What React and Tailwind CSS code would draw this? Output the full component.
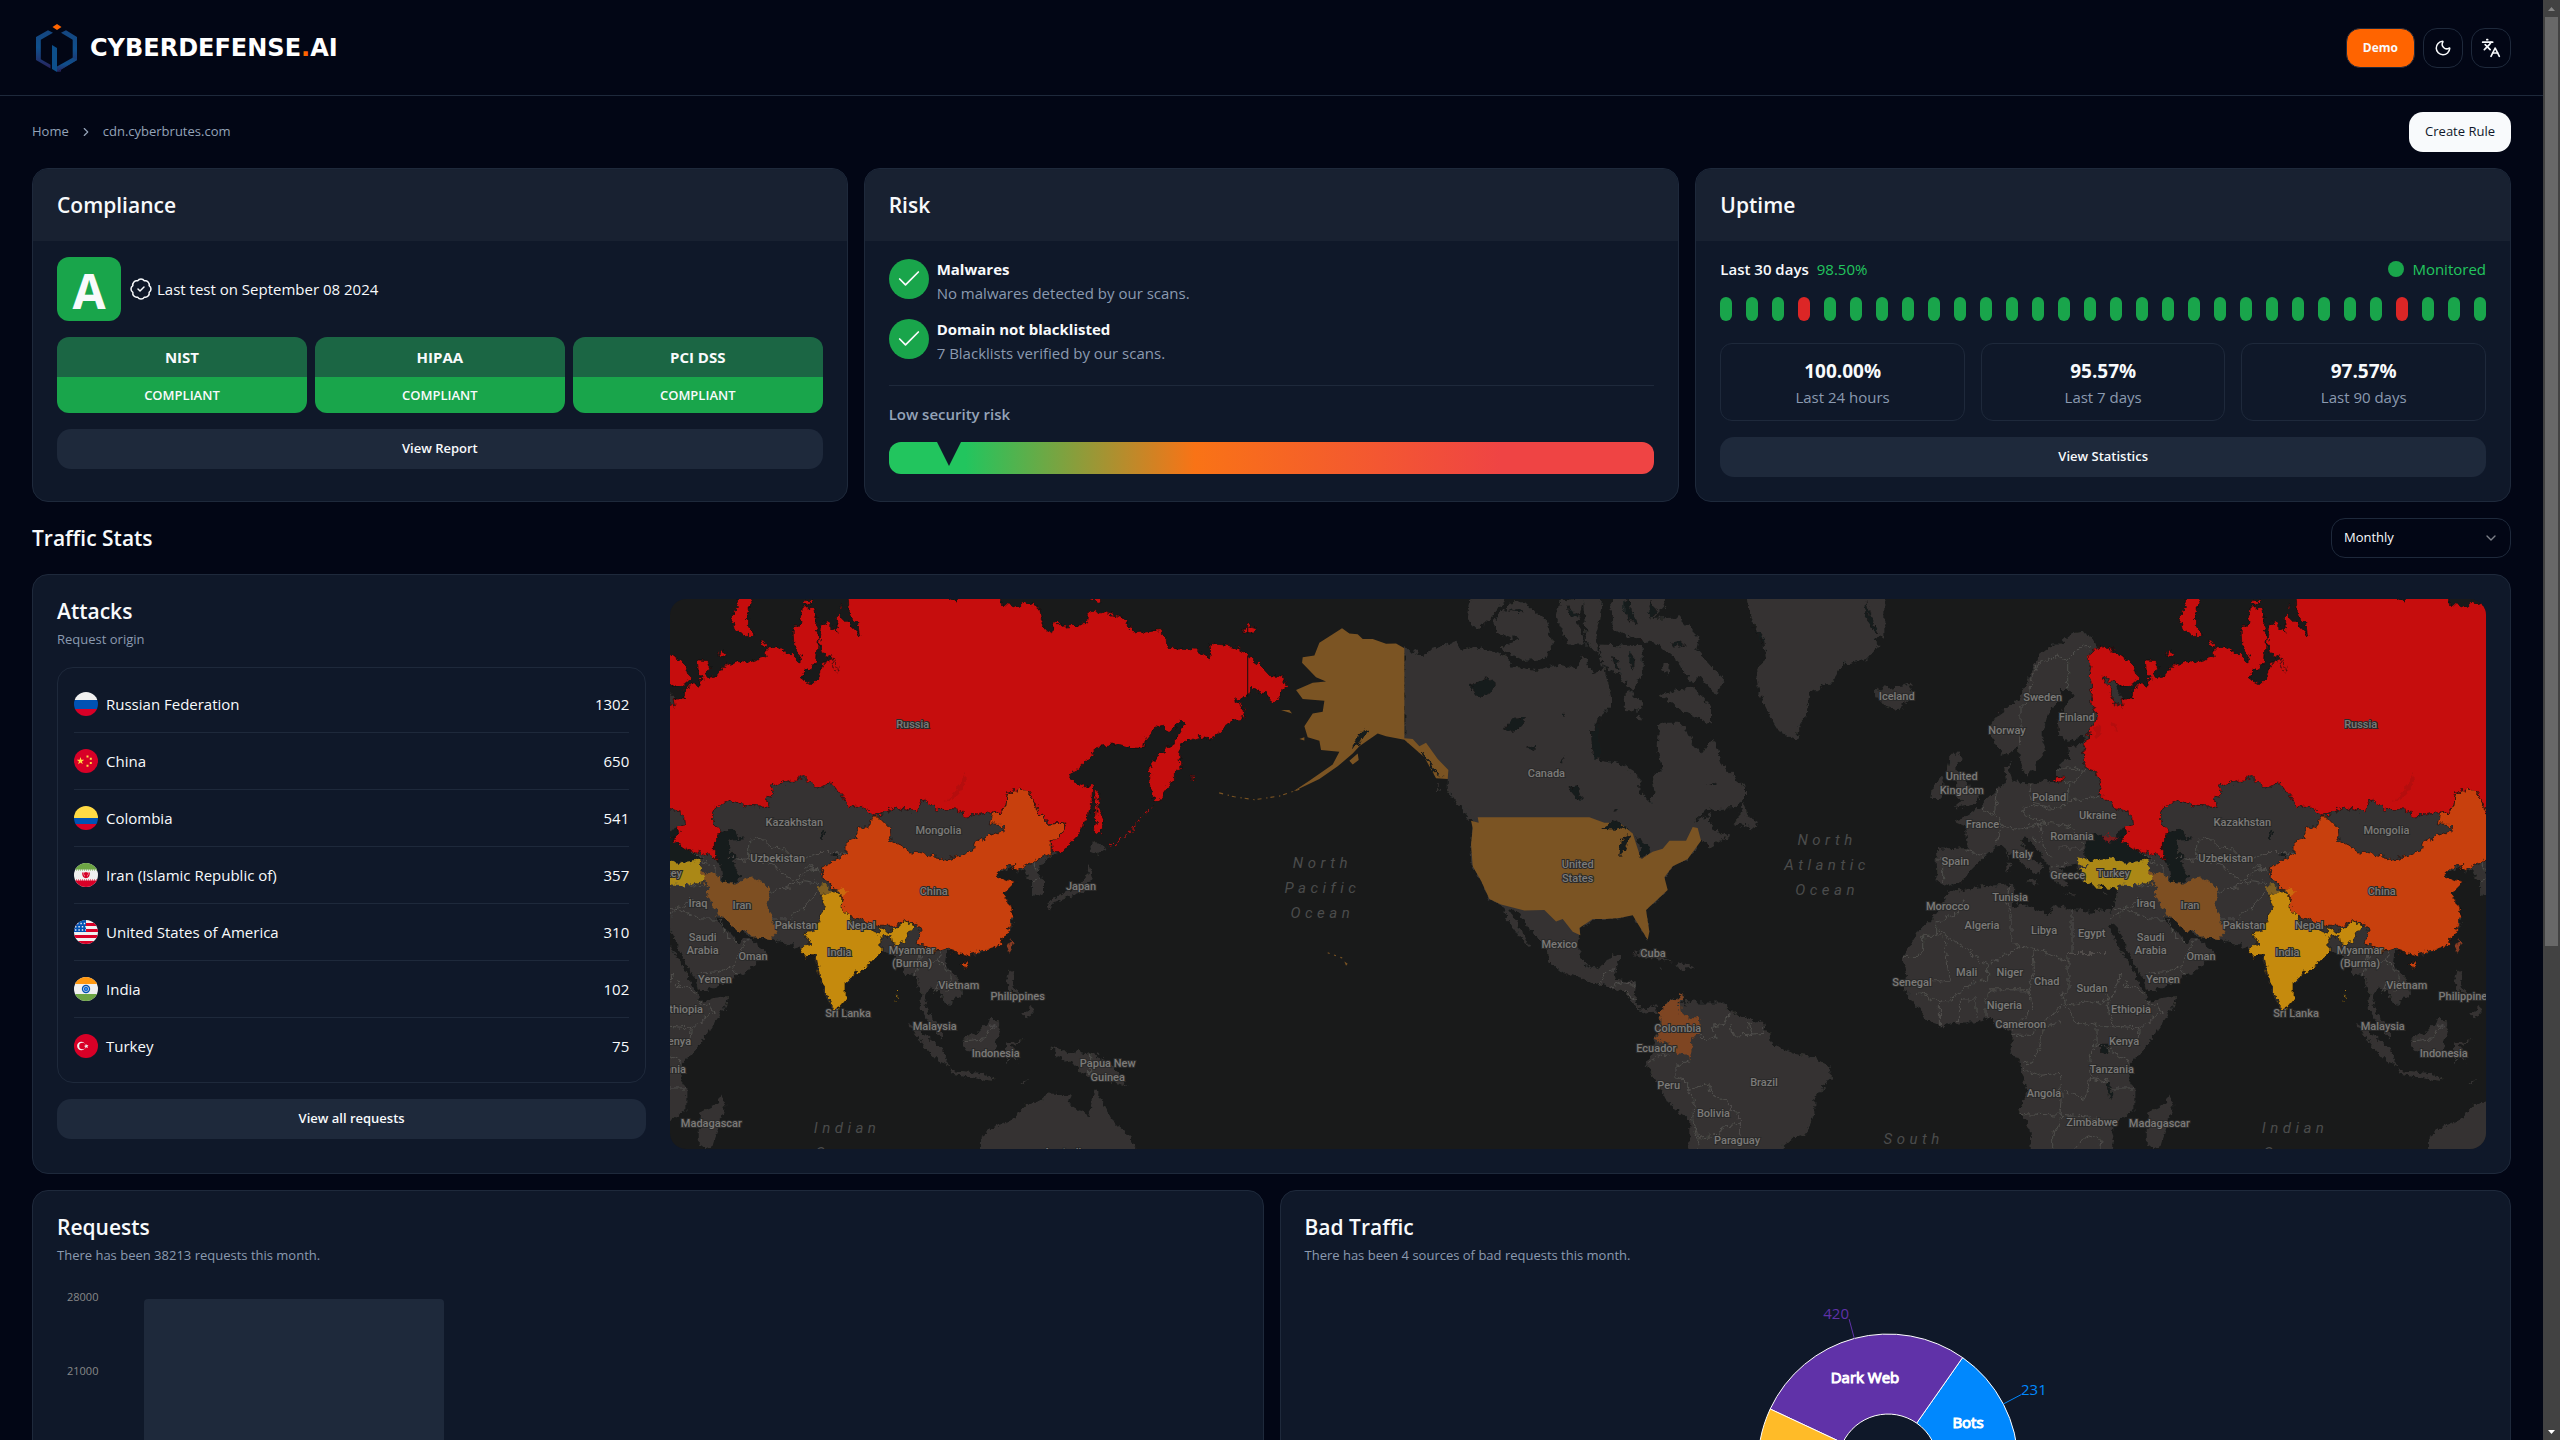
import { useState } from 'react'
import { BadgeCheck, Check, ChevronDown, ChevronRight, Languages, Moon } from 'lucide-react'

const standards = ['NIST', 'HIPAA', 'PCI DSS']

const scans = [
    { title: 'Malwares', text: 'No malwares detected by our scans.' },
    { title: 'Domain not blacklisted', text: '7 Blacklists verified by our scans.' },
]

const uptimeStats = [
    { value: '100.00%', label: 'Last 24 hours' },
    { value: '95.57%', label: 'Last 7 days' },
    { value: '97.57%', label: 'Last 90 days' },
]

const downDays = [3, 26]
const days = Array.from({ length: 30 }, (_, i) => !downDays.includes(i))

const attacks = [
    { code: 'ru', name: 'Russian Federation', count: 1302 },
    { code: 'cn', name: 'China', count: 650 },
    { code: 'co', name: 'Colombia', count: 541 },
    { code: 'ir', name: 'Iran (Islamic Republic of)', count: 357 },
    { code: 'us', name: 'United States of America', count: 310 },
    { code: 'in', name: 'India', count: 102 },
    { code: 'tr', name: 'Turkey', count: 75 },
]

const flags = {
    ru: (
        <>
            <path fill="#f0f0f0" d="M0 0h24v8H0z" />
            <path fill="#0052b4" d="M0 8h24v9H0z" />
            <path fill="#d80027" d="M0 17h24v7H0z" />
        </>
    ),
    cn: (
        <>
            <path fill="#d80027" d="M0 0h24v24H0z" />
            <path fill="#ffda44" d="m6.500 8 .9 2.800h2.900l-2.400 1.700.9 2.800-2.300-1.700-2.400 1.700.9-2.800-2.300-1.700h2.900z" />
            <path fill="#ffda44" d="M12.500 6.500h2v2h-2zM15.800 8.800h2v2h-2zM15.800 13h2v2h-2zM12.500 15.800h2v2h-2z" />
        </>
    ),
    co: (
        <>
            <path fill="#ffda44" d="M0 0h24v12H0z" />
            <path fill="#0052b4" d="M0 12h24v6H0z" />
            <path fill="#d80027" d="M0 18h24v6H0z" />
        </>
    ),
    ir: (
        <>
            <path fill="#f0f0f0" d="M0 0h24v24H0z" />
            <path fill="#6da544" d="M0 0h24v6.500H0z" />
            <path fill="#d80027" d="M0 17.500h24V24H0z" />
            <path stroke="#6da544" strokeDasharray="1 1" d="M0 7h24" />
            <path stroke="#d80027" strokeDasharray="1 1" d="M0 17h24" />
            <path stroke="#d80027" strokeWidth="1.400" fill="none" d="M8.800 9.500c0 3 1 5 3.200 5s3.200-2 3.200-5M12 9v6M10.500 9.500c0 2 .3 3 1.500 4 1.200-1 1.500-2 1.500-4" />
        </>
    ),
    us: (
        <>
            <path fill="#f0f0f0" d="M0 0h24v24H0z" />
            <path stroke="#d80027" strokeWidth="3" d="M0 4.500h24M0 10.500h24M0 16.500h24M0 22.500h24" />
            <path fill="#0052b4" d="M0 0h12v12H0z" />
            <path stroke="#f0f0f0" strokeWidth="1.400" strokeDasharray="1.400 2" d="M3 3.500h9M1 6.700h11M1 10h11" />
        </>
    ),
    in: (
        <>
            <path fill="#f0f0f0" d="M0 0h24v24H0z" />
            <path fill="#ff9811" d="M0 0h24v7H0z" />
            <path fill="#6da544" d="M0 17h24v7H0z" />
            <circle cx="12" cy="12" r="4.200" fill="#0052b4" />
            <circle cx="12" cy="12" r="2.600" fill="none" stroke="#f0f0f0" strokeWidth=".7" />
            <circle cx="12" cy="12" r="1.500" fill="#338af3" />
        </>
    ),
    tr: (
        <>
            <path fill="#d80027" d="M0 0h24v24H0z" />
            <circle cx="7.300" cy="12" r="4.200" fill="#f0f0f0" />
            <circle cx="8.400" cy="12" r="3.200" fill="#d80027" />
            <path fill="#f0f0f0" d="m12 9.800.7 1.500 1.700-.2-1 1.300.7 1.500-1.600-.6-1.200 1.200.1-1.700-1.500-.8 1.600-.5z" />
        </>
    ),
}

function Flag({ code }) {
    return (
        <svg viewBox="0 0 24 24" className="size-6 rounded-full" aria-hidden="true">
            {flags[code]}
        </svg>
    )
}

function Logo() {
    return (
        <a href="#" className="flex items-center gap-3 pl-1">
            <svg viewBox="0 0 42 48" className="h-12 w-[42px]" aria-hidden="true">
                <defs>
                    <linearGradient id="mark" x1="0" y1="0" x2="0" y2="1">
                        <stop offset="0" stopColor="#15457f" />
                        <stop offset=".45" stopColor="#0f4f8c" />
                        <stop offset="1" stopColor="#29235c" />
                    </linearGradient>
                </defs>
                <path fill="#ff6400" d="M21 0l4.500 3-4.500 3-4.500-3z" />
                <path fill="url(#mark)" d="M12 6.200l5 2.600L4.800 15.800v19.400L14.500 40.800v3.600L0 36V13z" />
                <path fill="url(#mark)" d="M30 6.200l-5 2.600 11.700 7V35L25 41.700V47.500L21 48l20-12V13z" />
                <path fill="#0d4f8a" d="M16 21l5 3v24l-5-3z" />
                <path fill="url(#mark)" d="M21 42.500l16-9 4 2.500-20 12z" />
            </svg>
            <span className="font-['DejaVu_Sans'] text-2xl leading-6 font-bold text-white">
                CYBERDEFENSE<span className="text-[#ff6400]">.</span>AI
            </span>
        </a>
    )
}

function Card({ title, children }) {
    return (
        <section className="flex flex-col overflow-hidden rounded-2xl border border-[#1e293b] bg-[#0f1829]">
            <h2 className="bg-[#182131] p-6 text-[21px] leading-6 font-semibold">{title}</h2>
            <div className="px-6 pt-4 pb-6">{children}</div>
        </section>
    )
}

function WideButton({ children }) {
    return (
        <button type="button" className="h-10 w-full rounded-[14px] bg-[#1e293b] text-[13px] font-semibold">
            {children}
        </button>
    )
}

function Compliance() {
    return (
        <Card title="Compliance">
            <div className="flex items-center gap-2">
                <div className="flex size-16 items-center justify-center rounded-xl bg-[#19a54b] pt-1 text-5xl font-bold">A</div>
                <p className="flex items-center gap-1 text-[15px]">
                    <BadgeCheck size={24} strokeWidth={1.5} />
                    Last test on September 08 2024
                </p>
            </div>
            <div className="my-4 grid grid-cols-3 gap-2 text-center">
                {standards.map(name => (
                    <div key={name} className="overflow-hidden rounded-xl">
                        <h3 className="bg-[#1b6644] text-[15px] leading-10 font-bold">{name}</h3>
                        <p className="bg-[#19a54b] text-[13px] leading-9 font-semibold">COMPLIANT</p>
                    </div>
                ))}
            </div>
            <WideButton>View Report</WideButton>
        </Card>
    )
}

function Risk() {
    return (
        <Card title="Risk">
            <ul className="flex flex-col gap-3 border-b border-[#1e293b] pb-5">
                {scans.map(scan => (
                    <li key={scan.title} className="flex gap-2 text-[15px] leading-6">
                        <span className="mt-0.5 flex size-10 items-center justify-center rounded-full bg-[#19a54b]">
                            <Check size={28} strokeWidth={1.5} />
                        </span>
                        <div>
                            <h3 className="font-bold">{scan.title}</h3>
                            <p className="text-[#8b9ab0]">{scan.text}</p>
                        </div>
                    </li>
                ))}
            </ul>
            <p className="my-4 text-[15px] leading-6 font-semibold text-[#94a3b8]">Low security risk</p>
            <div className="h-8 rounded-xl bg-linear-to-r/srgb from-[#22c55e] from-10% via-[#f97316] via-40% to-[#ef4444] to-80% pl-12">
                <svg viewBox="0 0 24 24" className="size-6 fill-[#0f1829]" aria-hidden="true">
                    <path d="M0 0h24L12 24z" />
                </svg>
            </div>
        </Card>
    )
}

function Uptime() {
    return (
        <Card title="Uptime">
            <div className="flex items-center justify-between text-[15px] leading-6">
                <p className="flex gap-2">
                    <span className="font-semibold">Last 30 days</span>
                    <span className="text-[#22c55e]">98.50%</span>
                </p>
                <p className="flex items-center gap-2 text-[#22c55e]">
                    <span className="size-4 rounded-full bg-[#19a54b]"></span>
                    Monitored
                </p>
            </div>
            <div className="mt-4 flex justify-between">
                {days.map((up, i) => (
                    <span key={i} className={`h-6 w-3 rounded-full ${up ? 'bg-[#19a54b]' : 'bg-[#dc2626]'}`}></span>
                ))}
            </div>
            <dl className="mt-[22px] mb-4 grid grid-cols-3 gap-4 text-center">
                {uptimeStats.map(stat => (
                    <div key={stat.label} className="flex flex-col-reverse rounded-xl border border-[#1e293b] pt-[13px] pb-[11px]">
                        <dt className="text-[15px] leading-6 text-[#8b9ab0]">{stat.label}</dt>
                        <dd className="text-[19px] leading-7 font-bold">{stat.value}</dd>
                    </div>
                ))}
            </dl>
            <WideButton>View Statistics</WideButton>
        </Card>
    )
}

// Map geometry is kept in grid units, 3 per pixel across and 2.751 per pixel down.
const GX = 3
const GY = 2.751
const MAP_WIDTH = 1817

const eurafrica = 'M60 150L40 150 0 180-30 235-60 300-130 345-150 380-135 420-110 455-65 430-60 470-45 508-15 495-5 470 20 440 5 400 20 360 25 340 60 300 65 275 95 275 100 290 70 330 55 360 60 400 80 415 140 400 130 425 85 430 90 460 70 475 50 490 50 510 70 515 70 527 40 530 15 525-30 535-80 525-92 490-78 470-105 490-100 530-130 550-165 580-180 600-215 620-255 635-220 650-215 710-310 715-305 800-275 815-230 800-205 770-165 735-130 705-110 705-70 735-20 778 0 782 10 762-10 745-40 715-55 690-40 680-10 710 20 750 40 790 62 815 85 812 70 790 75 775 60 765 90 760 115 755 115 770 130 805 160 812 205 818 235 812 230 850 215 885 200 880 150 885 100 880 60 868 40 868 30 895-5 880-50 865-80 870-75 815-100 810-170 815-230 830-270 825-295 870-320 900-360 935-395 990-408 1010-400 1060-405 1100-365 1150-335 1185-290 1200-240 1190-190 1190-150 1175-120 1200-85 1210-80 1235-90 1265-60 1300-45 1350-35 1385-60 1430-30 1480-25 1550 215 1550 225 1500 215 1475 285 1430 285 1370 270 1350 275 1300 310 1265 355 1210 405 1140 410 1120 325 1130 318 1110 270 1030 205 925 215 920 235 930 260 980 290 1040 315 1080 320 1105 370 1095 440 1060 490 1035 528 995 495 975 470 955 440 970 415 945 390 925 375 900 410 905 440 935 485 955 540 960 600 975 640 1000 670 1000 680 1050 700 1110 725 1155 760 1130 765 1080 800 1050 845 1020 870 995 900 1000 935 1030 940 1062 975 1060 990 1110 985 1150 1010 1185 1050 1235 1055 1225 1020 1175 1000 1140 1010 1090 1040 1100 1065 1145 1115 1110 1110 1080 1060 1030 1065 995 1080 985 1125 1005 1170 998 1210 985 1240 950 1268 910 1255 860 1235 835 1275 805 1240 800 1215 785 1265 760 1270 775 1300 768 1310 790 1325 800 1325 838 1355 838 1355 800 1335 775 1365 735 1410 720 1400 600 1000 500 300 400 180 165 160 130 130 115 100 120z'

const islands = 'M-255 445L-230 465-250 490-220 530-180 560-190 590-260 600-235 580-255 560-240 540-275 500-270 460zM-295 515L-280 545-300 575-325 575-320 545zM-490 265L-480 280-465 262-450 270-390 258-375 290-430 332-470 315-490 290zM-5 795L-45 800-10 815zM-100 750L-85 750-88 778-98 778zM-95 715L-88 730-92 742zM70 835L105 838 100 842zM192 838L208 832 200 842zM390 1388L402 1420 385 1465 365 1525 345 1538 325 1525 325 1480 330 1435 365 1420zM759 1150L779 1170 766 1182zM1509 690L1549 710 1514 730 1489 720zM1494 750L1504 790 1474 830 1419 850 1379 865 1364 860 1404 840 1459 815 1484 790zM1369 858L1384 870 1376 882zM1254 1045L1272 1050 1264 1085 1284 1110 1254 1100 1246 1075zM1289 1165L1319 1145 1322 1175 1299 1180zM949 1190L994 1215 1054 1265 1074 1310 1044 1300 1004 1260zM1074 1320L1164 1328 1214 1345 1200 1350 1130 1340 1080 1330zM1114 1235L1164 1215 1204 1175 1229 1195 1214 1250 1194 1280 1134 1275 1114 1250zM1244 1245L1304 1238 1264 1250 1279 1300 1254 1280 1244 1305zM1290 1355L1315 1345 1300 1360zM1379 1255L1414 1265 1434 1275 1464 1268 1544 1290 1574 1320 1609 1365 1554 1350 1504 1340 1469 1325 1444 1300 1399 1285zM1169 1550L1169 1505 1214 1475 1264 1460 1304 1415 1339 1410 1369 1385 1444 1388 1429 1410 1489 1445 1514 1372 1544 1430 1574 1470 1614 1500 1640 1550z'

const russia = 'M145 185L160 165 190 155 235 172 270 195 293 225 295 245 275 262 250 264 215 250 190 237 200 255 218 270 215 290 225 310 250 322 245 300 283 300 275 285 300 258 328 262 332 240 320 215 318 195 350 197 357 215 340 232 350 243 370 240 390 218 430 195 465 200 520 185 530 178 525 155 560 160 600 180 625 203 632 180 608 160 605 110 625 90 632 50 670 48 674 75 672 100 682 125 676 190 665 210 640 225 632 245 660 258 685 235 695 200 730 190 740 222 730 222 720 182 695 175 685 150 690 100 700 85 720 105 740 115 735 80 745 70 805 125 800 95 775 75 770 15 1070 15 1095 30 1130 15 1225 15 1230 40 1285 45 1300 32 1345 50 1350 80 1360 105 1379 122 1394 85 1409 100 1484 95 1489 60 1534 60 1599 75 1590 72 1604 85 1629 118 1704 112 1727 130 1729 158 1819 163 1849 185 1859 178 1856 147 1929 155 1969 180 1999 200 2034 235 2074 240 2089 265 2064 285 2054 310 2019 285 1984 275 1979 262 1969 295 1929 300 1954 318 1962 350 1924 358 1854 412 1824 402 1784 415 1769 425 1764 450 1769 490 1749 505 1749 525 1724 550 1709 570 1689 590 1676 530 1674 495 1689 465 1744 425 1779 370 1769 360 1734 395 1719 372 1694 375 1664 410 1659 435 1624 435 1584 425 1519 430 1484 470 1434 515 1469 540 1504 535 1502 580 1489 630 1454 680 1414 722 1384 722 1379 690 1409 680 1424 640 1374 640 1339 610 1314 560 1284 545 1249 555 1244 590 1234 612 1194 610 1164 615 1124 622 1094 605 1034 603 994 575 982 590 979 610 914 597 859 620 839 615 809 595 774 595 719 530 689 545 654 530 634 512 614 522 534 540 549 560 524 575 534 598 469 595 414 578 389 590 364 610 364 640 389 665 369 690 369 720 379 745 350 728 290 715 245 688 265 665 258 650 280 645 275 615 230 603 215 580 180 565 185 545 172 500 138 490 132 455 140 410 155 400 140 398 175 350 160 320 155 290 158 255 150 235 155 205z'

const russiaIslands = 'M487 15L470 60 468 95 490 125 460 125 425 100 420 85 440 30 445 15zM380 180L390 165 403 172 395 186zM505 137L525 152 520 160 508 152zM640 28L660 30 655 42 640 40zM740 50L750 38 752 55zM1954 115L1969 97 1999 105 1984 118zM1509 545L1522 560 1519 600 1539 630 1526 672 1509 672 1514 610zM1480 20L1530 15 1525 35zM38 520L70 515 72 527 50 528zM1798 510L1806 518 1802 522z'

const china = 'M859 622L894 655 896 685 959 723 1064 740 1114 728 1144 715 1149 692 1244 660 1224 645 1194 643 1202 612 1234 612 1244 590 1249 555 1284 545 1314 560 1339 610 1374 645 1424 638 1409 680 1379 690 1379 725 1344 740 1264 775 1270 755 1240 765 1215 785 1254 800 1274 805 1234 835 1254 860 1267 900 1239 955 1214 985 1124 1005 1084 998 1074 985 1029 998 989 978 974 970 989 950 984 925 944 910 904 925 854 925 804 905 764 895 749 870 754 835 724 820 689 780 694 765 764 725 764 690 794 685 799 655 829 655 844 622zM1109 1030L1134 1022 1122 1043z'

const india = 'M689 840L724 825 752 840 749 870 774 895 794 925 864 945 864 928 894 940 944 910 969 925 949 950 924 980 904 975 899 950 868 955 869 1000 844 1020 794 1055 764 1075 764 1130 744 1152 729 1155 704 1110 684 1060 674 1005 644 1012 624 990 654 970 639 940 674 935 684 905 699 870z'

const iran = 'M333 772L350 782 375 770 385 795 410 810 440 810 455 797 485 790 530 815 535 835 528 870 540 900 558 940 540 960 485 955 470 938 440 940 400 905 380 895 365 870 345 835 350 810 332 790z'

const turkey = 'M115 738L140 745 205 737 270 752 320 745 335 775 335 803 290 812 240 810 235 822 205 818 160 815 130 805 140 790 115 770 150 757 118 755z'

const blackSea = 'M135 740L135 700 165 670 190 680 215 695 250 655 275 650 245 690 315 725 330 745 270 750 205 737 150 745z'

const caspian = 'M385 665L400 658 430 657 440 678 458 685 415 692 410 712 440 738 425 755 450 790 430 810 395 805 390 770 375 745 365 700 372 685z'

const oldBorders = 'M472 745L472 690 504 680 539 710 579 712 604 735 644 740 674 722 734 722 764 730M415 735L470 745M480 745L530 750 610 800 640 775 680 765M535 830L590 815 640 800 680 805M540 905L590 905 630 880 680 830M645 760L690 775M215 905L300 850 340 870M250 810L300 815 350 810M215 870L260 880 330 905 380 905M320 1055L380 1050 425 1035 470 955M425 1035L435 1065M385 905L410 955 440 970M98 880L98 1000 200 1000M98 1000L86 1000 86 1105 65 1110 75 1135 110 1140 150 1130 190 1140 205 1115M-15 985L86 1025M240 1060L260 1085 320 1110M240 1060L225 1110 205 1130 210 1170 230 1200 300 1205 375 1160 320 1130M75 1135L30 1180-20 1200M75 1140L110 1190 230 1205M300 1205L295 1245 270 1250M170 1205L170 1250 200 1260 270 1300M170 1250L150 1280 160 1340 200 1350M210 1370L285 1370M-300 935L-175 1020-155 1030-60 983M-308 950L-350 950-350 990-365 1008-408 1008M-308 950L-308 915-250 890-225 850M-285 965L-270 1075-320 1075M-285 965L-308 940M-88 810L-100 860-85 890-85 965-60 983-20 985M-20 985L-15 1050-30 1090-35 1100-150 1100-160 1130-160 1175M-155 1030L-155 1070-200 1080-270 1130M-270 1130L-310 1130-370 1105M-300 1200L-300 1130M-240 1190L-240 1125-190 1125-190 1180M-35 1100L-20 1150-80 1210M-80 1225L-20 1225-10 1200 15 1195 0 1260-20 1300-55 1305M15 1200L70 1190M-50 1315L0 1335 60 1330 65 1395 62 1445-60 1440M62 1445L150 1450 215 1475M65 1375L140 1400 150 1345 210 1355M40 1500L40 1550M40 1500L70 1450M100 1540L140 1500 180 1510M180 1550L185 1510M-60 435L-55 400-55 320-30 300-25 240 0 200 50 180 80 195 130 150 150 165M85 195L85 275M50 490L100 490 140 500M70 527L110 525 130 500M85 530L85 590M90 580L180 570M-30 535L-20 590 30 600 80 595M-20 590L-55 605-30 625 20 640M-125 550L-135 610-110 650M-175 595L-135 625M-125 650L-60 660 0 645M-130 700L-120 660M-220 715L-165 730M-310 740L-290 740-290 800M0 645L40 640 90 650 135 700M-30 680L0 690 40 740M60 710L130 710M35 760L90 750M0 645L10 690M974 1060L985 1000 1000 990M1000 1040L1040 1020 1080 1060 1070 1110M1040 1020L1050 990M1030 1110L1040 1080 1080 1085M1118 1240L1180 1235 1195 1200 1215 1200M1498 1278L1498 1340M330 748L360 755 375 770M300 722L350 745M1324 740L1335 775M1325 800L1350 790'

const northAmerica = 'M855 160L880 165 910 182 940 162 1010 140 1030 165 1060 155 1120 170 1165 185 1175 210 1250 220 1320 205 1370 215 1385 180 1400 195 1420 230 1455 215 1475 290 1475 320 1430 360 1415 400 1440 470 1510 480 1560 515 1565 560 1595 585 1605 560 1600 520 1630 490 1615 430 1620 365 1680 365 1710 395 1725 430 1745 450 1780 410 1810 480 1850 520 1880 545 1880 575 1840 600 1760 605 1720 640 1760 625 1775 610 1768 640 1790 665 1830 675 1770 708 1755 690 1745 690 1705 740 1660 760 1635 790 1645 825 1580 880 1590 940 1585 962 1560 925 1540 895 1460 905 1420 905 1380 930 1376 985 1395 1030 1430 1042 1460 1025 1475 1005 1505 1010 1485 1050 1490 1072 1550 1080 1545 1130 1570 1155 1605 1145 1625 1165 1605 1160 1575 1162 1555 1150 1510 1105 1460 1090 1440 1085 1390 1068 1330 1050 1290 1025 1285 990 1240 945 1190 880 1165 878 1185 905 1215 950 1232 982 1200 955 1175 920 1145 868 1110 850 1085 800 1060 760 1055 700 1060 640 1015 590 985 550 985 520 930 470 855 410z'

const arctic = 'M1055 15L1170 15 1110 80 1075 108 1042 80zM1125 90L1170 35 1210 30 1245 60 1285 90 1300 150 1280 190 1215 195 1145 160 1200 135 1130 120zM1320 30L1395 15 1375 90 1400 150 1345 150 1310 80zM1390 15L1450 15 1440 80 1430 120 1440 180 1400 140zM1475 30L1500 15 1630 15 1640 40 1600 80 1680 75 1740 130 1730 165 1815 250 1790 290 1745 240 1715 255 1680 200 1640 170 1610 145 1540 130 1480 110zM1440 150L1570 155 1570 230 1535 280 1500 230 1450 210zM1510 290L1535 280 1575 320 1550 332 1520 330zM1620 290L1720 265 1775 320 1775 370 1730 350 1690 330zM1545 350L1565 345 1560 360zM1630 200L1650 205 1645 230 1628 220zM1885 15L2295 15 2295 130 2260 135 2280 150 2240 190 2170 205 2140 250 2070 285 2060 350 2040 370 2030 413 1980 390 1950 345 1915 270 1910 215 1940 190 1935 140 1900 90 1890 60zM1845 645L1875 585 1885 620 1915 635 1912 655zM955 535L965 545 960 560zM1015 590L1050 610 1075 630 1050 632z'

const southAmerica = 'M1625 1165L1645 1130 1695 1112 1680 1140 1700 1130 1740 1135 1810 1135 1835 1160 1920 1190 1950 1220 1955 1250 2020 1275 2080 1285 2130 1310 2135 1340 2085 1400 2085 1440 2060 1500 2020 1510 1970 1550 1710 1550 1710 1455 1645 1410 1595 1330 1580 1300 1595 1270 1610 1220zM1540 1005L1570 990 1620 1005 1660 1022 1610 1015zM1665 1035L1690 1025 1730 1040 1690 1045zM1615 1043L1632 1045 1620 1048z'

const colombia = 'M1695 1112L1680 1130 1685 1165 1705 1175 1740 1180 1742 1220 1710 1235 1720 1250 1710 1295 1705 1275 1675 1275 1645 1248 1608 1235 1625 1200 1620 1160 1650 1130z'

const usa = 'M1075 625L1410 625 1455 640 1500 640 1540 670 1565 740 1600 720 1630 712 1650 690 1700 690 1720 652 1735 655 1745 690 1705 740 1660 760 1635 790 1645 825 1580 880 1590 940 1585 962 1560 925 1540 895 1500 902 1460 905 1420 905 1380 930 1383 950 1360 940 1330 905 1310 912 1275 880 1215 882 1145 865 1110 850 1085 800 1060 760 1055 700 1060 655 1055 635 1078 640z'

const alaska = 'M668 105L690 120 715 122 730 135 760 135 800 148 830 147 855 160 855 408 880 410 900 430 920 420 955 465 987 495 985 520 950 518 915 460 855 412 800 402 775 395 720 430 700 450 655 485 600 520 520 555 570 525 640 480 660 445 605 440 600 415 565 405 555 375 580 340 610 335 615 305 550 300 530 275 580 255 620 252 590 240 548 200 550 185 585 180 600 145 640 122zM690 470L715 450 718 468 700 480zM540 410L555 405 555 414zM485 330L510 330 518 340zM675 1022L685 1028 680 1034z'

const lakes = 'M1445 660L1485 635 1535 660 1500 655 1480 662 1460 660zM1500 735L1505 685 1530 675 1530 685 1512 730zM1550 680L1580 695 1595 712 1590 722 1560 742 1565 715zM1050 265L1110 240 1135 260 1100 292 1070 290zM1150 385L1180 355 1225 350 1190 385 1165 393zM1220 435L1250 428 1240 440zM1345 545L1375 540 1385 575 1365 565zM1320 470L1330 460 1328 478zM1415 400L1440 355 1440 470 1420 450zM1325 340L1340 335 1335 347zM1765 535L1785 530 1790 538zM1480 610L1495 605 1490 615zM1690 1135L1700 1145 1692 1148z'

// channels and inlets of the arctic islands and the Alaskan coast
const inlets = 'M1515 30l15-10 5 40 25 35-20-4-25-30zM1590 30l25 30-20 20-8-30zM1345 40l20 25 20-5-10 15-25-5zM1160 60l40-8 10 12-30-2zM1700 150l-30 5-20-10 30-4zM1475 180l20 10 5 30-12-8zM1530 165l15 25-5 30-10-20zM2240 30l12 40 25 50-12-4-28-45zM1895 100l40 25-8 20-10-20zM740 385l-20 10-22 40 16-6 10-18 28-18zM905 440l40 50 22 26-30-24-32-44z'

const newBorders = 'M1742 1225L1760 1240 1790 1230 1780 1200 1810 1195 1835 1160M1835 1190L1840 1225 1930 1220 1935 1195M1710 1295L1670 1310 1670 1340 1705 1355 1705 1375 1770 1358 1775 1385 1830 1410 1830 1430 1860 1440 1860 1470 1810 1475 1800 1500 1740 1505 1730 1550M1705 1375L1725 1400 1720 1455 1735 1505M1590 1300L1620 1280 1650 1280M1860 1470L1860 1500 1890 1520M1440 1085L1460 1050 1485 1048M1470 1090L1510 1080 1545 1085M1510 1105L1550 1130M1880 1185L1900 1225'

const oldLabels = [
    ['Russia', 964, 369], ['Kazakhstan', 609, 639], ['Mongolia', 1041, 661], ['Uzbekistan', 559, 740],
    ['China', 1027, 829], ['Iran', 452, 868], ['Iraq', 320, 862], ['Pakistan', 614, 924], ['Nepal', 810, 924],
    ['India', 744, 997], ['Saudi', 334, 956], ['Arabia', 334, 993], ['Oman', 485, 1007], ['Yemen', 371, 1071],
    ['Myanmar', 962, 991], ['(Burma)', 962, 1028], ['Vietnam', 1102, 1089], ['Philippines', 1279, 1118],
    ['Sri Lanka', 770, 1165], ['Malaysia', 1030, 1200], ['Indonesia', 1213, 1275], ['Papua New', 1549, 1302],
    ['Guinea', 1549, 1340], ['Japan', 1469, 817], ['Madagascar', 360, 1468], ['Ethiopia', 275, 1154],
    ['Kenya', 254, 1243], ['Tanzania', 217, 1318], ['Zimbabwe', 158, 1466], ['Sudan', 158, 1095],
    ['Egypt', 157, 945], ['Turkey', 222, 779], ['Greece', 85, 785], ['Romania', 98, 678], ['Ukraine', 175, 620],
    ['Poland', 29, 570], ['Finland', 112, 350], ['Sweden', 10, 295], ['Norway', -97, 386], ['United', -233, 513],
    ['Kingdom', -233, 551], ['France', -171, 645], ['Spain', -252, 746], ['Italy', -51, 729], ['Iceland', -428, 294],
    ['Tunisia', -88, 847], ['Morocco', -275, 870], ['Algeria', -172, 924], ['Libya', 14, 938], ['Mali', -218, 1053],
    ['Niger', -89, 1053], ['Chad', 22, 1077], ['Nigeria', -105, 1143], ['Cameroon', -56, 1196],
    ['Senegal', -382, 1079], ['Angola', 14, 1385], ['Australia', 1422, 1548],
]

const newLabels = [
    ['Canada', 1281, 506], ['United', 1375, 756], ['States', 1375, 793], ['Mexico', 1320, 976], ['Cuba', 1601, 1000],
    ['Colombia', 1675, 1206], ['Ecuador', 1611, 1262], ['Peru', 1648, 1363], ['Brazil', 1934, 1356],
    ['Bolivia', 1782, 1440], ['Paraguay', 1853, 1514],
]

const oldOceans = [['Indian', 767, 1480], ['Ocean', 767, 1548]]

const newOceans = [
    ['North', 609, 750], ['Pacific', 609, 820], ['Ocean', 609, 888],
    ['North', 2123, 687], ['Atlantic', 2123, 757], ['Ocean', 2123, 826], ['South', 2383, 1510],
]

function Labels({ items, left, ocean }) {
    // the world repeats sideways, so skip the names that fall outside of the frame
    const visible = items.filter(([text, x]) => {
        const center = left + x / GX
        const half = text.length * 3
        return center + half > 0 && center - half < MAP_WIDTH
    })

    return visible.map(([text, x, y]) => (
        <text
            key={`${text}-${x}`}
            x={left + x / GX}
            y={y / GY - 9}
            textAnchor="middle"
            dominantBaseline="central"
            className={ocean
                ? "fill-[#4b4c4c] font-[Roboto] text-[15px] tracking-[0.3em] italic"
                : "fill-[#7c7a78] stroke-[#2a2a2a] stroke-2 font-[Roboto] text-[11px] font-medium [paint-order:stroke]"}
        >
            {text}
        </text>
    ))
}

function OldWorld() {
    return (
        <g transform="scale(.33333 .3635)">
            <g filter="url(#coast)">
                <g fill="#343332">
                    <path d={eurafrica} />
                    <path d={islands} />
                </g>
                <g fill="#191a1a">
                    <path d={blackSea} />
                    <path d={caspian} />
                    <path d="M685 680l12-16 8-3-6 12-10 10zM720 728l18-4 4 6-18 4zM182 1248h22v24h-22zM205 1355l8 2 4 45-8-4z" />
                </g>
                <path fill="none" stroke="#5d5b58" strokeWidth="2" d={oldBorders} />
                <g stroke="#15100f" strokeWidth="2">
                    <path fill="#c60d0e" d={russia} />
                    <path fill="#c60d0e" d={russiaIslands} />
                    <path fill="#c8400f" d={china} />
                    <path fill="#c58a10" d={india} />
                </g>
                <path fill="#b50a0b" d="M1120 503l4 20-12 25-20 25-38 8 28-14 22-28zM160 378l20-4 14 20-22 16zM214 364l14 4 8 20-12-2z" />
                <path fill="#ab8818" d={turkey} />
                <path fill="#7e4f23" d={iran} />
                <path fill="#7a1a1d" d="M190 685l18-16 10 10 22 4-22 5-10 9z" />
                <path fill="#7e5f20" d="M675 818l20-9 30 18-6 10-30-2z" />
                <path fill="#cc6a10" d="M740 828l12-8 15 10-10 14z" />
                <path fill="#8a3b22" d="M1259 960l7 15-14 23-6-13z" />
                <path fill="none" stroke="#c58a10" strokeWidth="3" strokeDasharray="8 8" d="M920 1098l-6 34" />
                <path fill="none" stroke="#c60d0e" strokeWidth="3" strokeDasharray="10 8" d="M1553 708l60-38 44-50 26-24" />
            </g>
            <path stroke="#15100f" strokeWidth="3" d="M1969 96v24M1969 180v114" />
        </g>
    )
}

function AttackMap() {
    return (
        <svg
            viewBox="0 0 1817 550"
            preserveAspectRatio="xMidYMid slice"
            role="img"
            aria-label="Attacks by country"
            className="h-[550px] w-full rounded-2xl bg-[#191a1a]"
        >
            <defs>
                <filter id="coast" x="-20%" y="-5%" width="140%" height="110%">
                    <feTurbulence type="fractalNoise" baseFrequency=".06" numOctaves="3" seed="4" />
                    <feDisplacementMap in="SourceGraphic" scale="24" xChannelSelector="R" yChannelSelector="G" />
                </filter>
            </defs>
            <g transform="translate(450 -9)">
                <g transform="scale(.33333 .3635)">
                    <g filter="url(#coast)">
                        <g fill="#343332">
                            <path d={northAmerica} />
                            <path d={arctic} />
                            <path d={southAmerica} />
                        </g>
                        <path fill="none" stroke="#5d5b58" strokeWidth="2" d={newBorders} />
                        <path fill="#7e4420" d={colombia} />
                    </g>
                    <path fill="#7b5423" d={usa} />
                    <path fill="#7b5423" d={alaska} />
                    <g filter="url(#coast)" fill="#191a1a">
                        <path d={lakes} />
                        <path d={inlets} />
                    </g>
                    <path fill="none" stroke="#7b5423" strokeWidth="3" strokeDasharray="12 9 4 14" d="M540 548l-60 19-75 10-60-8-50-12" />
                    <path fill="none" stroke="#7b5423" strokeWidth="3" strokeDasharray="6 14" d="M625 998l48 16" />
                </g>
            </g>
            <g transform="translate(-78 -9)"><OldWorld /></g>
            <g transform="translate(1370 -9)"><OldWorld /></g>
            <Labels items={newLabels} left={450} />
            <Labels items={newOceans} left={450} ocean />
            <Labels items={oldLabels} left={-78} />
            <Labels items={oldOceans} left={-78} ocean />
            <Labels items={oldLabels} left={1370} />
            <Labels items={oldOceans} left={1370} ocean />
        </svg>
    )
}

function Attacks() {
    return (
        <section className="grid grid-cols-4 gap-6 rounded-2xl border border-[#1e293b] bg-[#0f1829] p-6">
            <div>
                <h2 className="text-[21px] leading-6 font-semibold">Attacks</h2>
                <p className="mt-1.5 text-[13px] leading-5 text-[#8b9ab0]">Request origin</p>
                <ul className="mt-[18px] mb-4 rounded-2xl border border-[#1e293b] px-4 py-2">
                    {attacks.map(attack => (
                        <li key={attack.code} className="border-b border-[#1e293b] last:border-b-0">
                            <div className="flex h-14 items-center gap-2 text-[15px]">
                                <Flag code={attack.code} />
                                <span className="flex-1">{attack.name}</span>
                                <span>{attack.count}</span>
                            </div>
                        </li>
                    ))}
                </ul>
                <WideButton>View all requests</WideButton>
            </div>
            <div className="col-span-3">
                <AttackMap />
            </div>
        </section>
    )
}

function Requests() {
    return (
        <section className="rounded-2xl border border-[#1e293b] bg-[#0f1829] p-6">
            <h2 className="text-[21px] leading-6 font-semibold">Requests</h2>
            <p className="mt-1.5 text-[13px] leading-5 text-[#8b9ab0]">There has been 38213 requests this month.</p>
            <div className="mt-6 flex gap-[46px] pl-2.5">
                <div className="flex flex-col gap-[58px] text-right text-[11px] leading-4 text-[#888888]">
                    <span>28000</span>
                    <span>21000</span>
                    <span>14000</span>
                    <span>7000</span>
                    <span>0</span>
                </div>
                <div className="mt-2.5 h-72 w-[300px] rounded-t bg-[#1e293b]"></div>
            </div>
        </section>
    )
}

function BadTraffic() {
    return (
        <section className="rounded-2xl border border-[#1e293b] bg-[#0f1829] p-6">
            <h2 className="text-[21px] leading-6 font-semibold">Bad Traffic</h2>
            <p className="mt-1.5 text-[13px] leading-5 text-[#8b9ab0]">There has been 4 sources of bad requests this month.</p>
            <svg viewBox="-193 -175 400 350" className="mx-auto mt-6 h-[350px] w-[400px] text-[15px]" role="img" aria-label="Bad requests by source">
                <g stroke="#fff">
                    <path fill="#00c49f" d="M130 0A130 130 0 0 1 0 130L0 50A50 50 0 0 0 50 0z" />
                    <path fill="#0088fe" d="M130 0A130 130 0 0 0 74.600-106.400L28.700-40.900A50 50 0 0 1 50 0z" />
                    <path fill="#6032a8" d="M74.600-106.400A130 130 0 0 0-117.800-55L-45.300-21.100A50 50 0 0 1 28.700-40.900z" />
                    <path fill="#ffbb28" d="M-117.800-55A130 130 0 0 0 0 130L0 50A50 50 0 0 1-45.300-21.100z" />
                </g>
                <path stroke="#6032a8" d="M-33.700-125.600l-5.200-19.300" />
                <path stroke="#0088fe" d="M115.300-60l17.700-9.300" />
                <g dominantBaseline="central">
                    <text x="-39" y="-151" textAnchor="end" fill="#6032a8">420</text>
                    <text x="133" y="-75" fill="#0088fe">231</text>
                    <g textAnchor="middle" fill="#fff" stroke="#fff">
                        <text x="-23" y="-87">Dark Web</text>
                        <text x="80" y="-42">Bots</text>
                    </g>
                </g>
            </svg>
        </section>
    )
}

export default function App() {
    const [period, setPeriod] = useState('monthly')

    return (
        <div className="flex h-screen overflow-hidden bg-[#020615] font-['Open_Sans','Noto_Sans',sans-serif] text-[#f8fafc]">
            <div className="min-w-0 flex-1 overflow-hidden">
                <header className="flex h-24 items-center justify-between border-b border-[#1e293b] px-8">
                    <Logo />
                    <div className="flex gap-2">
                        <button type="button" className="h-10 rounded-[14px] border border-[#1e293b] bg-[#ff6400] px-4 text-xs font-bold">Demo</button>
                        <button type="button" aria-label="Toggle theme" className="flex size-10 items-center justify-center rounded-[14px] border border-[#1e293b]">
                            <Moon size={18} strokeWidth={2} />
                        </button>
                        <button type="button" aria-label="Change language" className="flex size-10 items-center justify-center rounded-[14px] border border-[#1e293b]">
                            <Languages size={20} strokeWidth={2} />
                        </button>
                    </div>
                </header>

                <main className="flex flex-col gap-4 px-8 py-4">
                    <div className="flex items-center justify-between">
                        <nav aria-label="Breadcrumb" className="flex items-center gap-2.5 text-[13px] text-[#94a3b8]">
                            <a href="#">Home</a>
                            <ChevronRight size={14} />
                            <a href="#">cdn.cyberbrutes.com</a>
                        </nav>
                        <button type="button" className="h-10 rounded-[14px] bg-[#f8fafc] px-4 text-[13px] font-medium text-[#0f172a]">Create Rule</button>
                    </div>

                    <div className="grid grid-cols-3 gap-4">
                        <Compliance />
                        <Risk />
                        <Uptime />
                    </div>

                    <div className="flex items-center justify-between">
                        <h2 className="text-[21px] leading-6 font-semibold">Traffic Stats</h2>
                        <div className="relative w-[180px]">
                            <select
                                aria-label="Period"
                                value={period}
                                onChange={(e) => setPeriod(e.target.value)}
                                className="h-10 w-full appearance-none rounded-[14px] border border-[#1e293b] bg-transparent px-3 text-[13px]"
                            >
                                <option value="monthly">Monthly</option>
                                <option value="weekly">Weekly</option>
                            </select>
                            <ChevronDown size={16} className="pointer-events-none absolute top-3 right-3 opacity-50" />
                        </div>
                    </div>

                    <Attacks />

                    <div className="grid grid-cols-2 gap-4">
                        <Requests />
                        <BadTraffic />
                    </div>
                </main>
            </div>

            {/* scrollbar */}
            <div className="flex w-[17px] flex-col items-center bg-[#424242]" aria-hidden="true">
                <svg viewBox="0 0 17 17" className="size-[17px] fill-[#868686]"><path d="M5 11h7L8.500 7z" /></svg>
                <div className="h-[64.500%] w-[13px] bg-[#686868]"></div>
                <svg viewBox="0 0 17 17" className="mt-auto size-[17px] fill-white"><path d="M5 7h7l-3.500 4z" /></svg>
            </div>
        </div>
    )
}
